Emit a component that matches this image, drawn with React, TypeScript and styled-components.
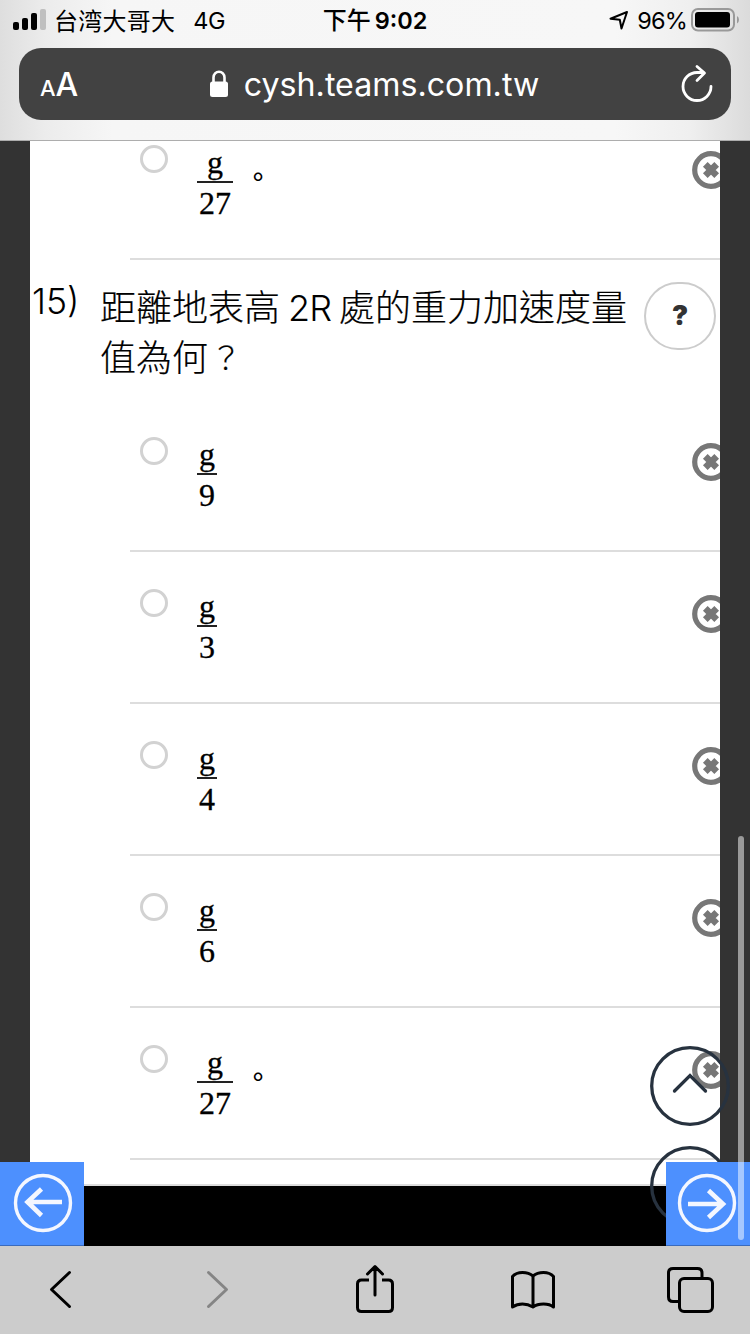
import React from 'react';
import styled, { createGlobalStyle } from 'styled-components';

const UI = `Inter, "Noto Sans CJK TC", sans-serif`;
const BODY = `Inter, "Noto Sans CJK TC", sans-serif`;

const Global = createGlobalStyle`
  * { box-sizing: border-box; }
  html, body { margin: 0; background: #000; }
`;

const Screen = styled.div`
  position: relative;
  display: flex;
  flex-direction: column;
  width: 750px;
  height: 1334px;
  overflow: hidden;
  font-family: ${UI};
  color: #000;
`;

const Header = styled.header`
  display: flex;
  flex-direction: column;
  flex: none;
  height: 141px;
  background: linear-gradient(to right, #dedede 0, #ececec 6%, #f6f6f6 15%, #f7f7f7 82%, #efefef 92%, #dbdbdb 100%);
  border-bottom: 1px solid #adadad;
`;

const StatusBar = styled.div`
  display: grid;
  grid-template-columns: 250px 1fr 250px;
  grid-template-rows: 40px;
  align-items: center;
  height: 40px;
  line-height: 34px;
  white-space: nowrap;
`;

const StatusLeft = styled.div`
  display: flex;
  align-items: center;
  padding-left: 13px;
`;

const Carrier = styled.span`
  margin-left: 8px;
  padding-bottom: 1px;
  font: 400 24px/34px "Noto Sans CJK SC", sans-serif;
  letter-spacing: 0.25px;
`;

const Network = styled.span`
  margin-left: 18px;
  padding-top: 1px;
  font-size: 23.5px;
  letter-spacing: -0.4px;
`;

const Clock = styled.div`
  display: flex;
  justify-content: center;
  align-items: center;
  gap: 4px;
  padding-top: 1px;
  font-size: 23.5px;
  font-weight: 600;
`;

const Meridiem = styled.span`
  padding-bottom: 3px;
  font: 500 24px/34px "Noto Sans CJK SC", sans-serif;
`;

const StatusRight = styled.div`
  display: flex;
  align-items: center;
  justify-content: flex-end;
  padding-right: 10px;
`;

const Percent = styled.span`
  margin: 0 4px 0 8px;
  padding-top: 1px;
  font-size: 23.5px;
  letter-spacing: -0.8px;
`;

const AddressBar = styled.div`
  display: flex;
  align-items: center;
  height: 72px;
  margin: 8px 19px 0;
  padding: 0 17px 0 21px;
  border-radius: 22px;
  background: #424242;
  color: #fff;
`;

const TextSize = styled.div`
  display: flex;
  align-items: baseline;
  width: 60px;
  padding-top: 4px;
  line-height: 40px;
`;

const SizeLetter = styled.span<{ $size: number }>`
  font-size: ${(p) => p.$size}px;
  font-weight: 450;
`;

const Address = styled.div`
  display: flex;
  flex: 1;
  align-items: center;
  justify-content: center;
  gap: 15px;
  padding-right: 32px;
  font-size: 32.2px;
  line-height: 70px;
`;

const Host = styled.span`
  padding-top: 2px;
`;

const Viewport = styled.main`
  flex: none;
  height: 1105px;
  overflow: hidden;
  background: linear-gradient(#333 1021px, #000 1021px);
`;

const Sheet = styled.div`
  height: 1045px;
  margin: 0 30px;
  padding-left: 100px;
  overflow: hidden;
  background: #fff;
  border-bottom: 2px solid #ddd;
`;

const SheetEnd = styled.div`
  height: 60px;
  background: #000;
`;

const OptionRow = styled.label<{ $clipped?: boolean }>`
  display: flex;
  align-items: flex-start;
  height: 152px;
  margin-top: ${(p) => (p.$clipped ? -33 : 0)}px;
  padding-left: 10px;
  border-bottom: 2px solid #ddd;
`;

const Radio = styled.span`
  flex: none;
  width: 28px;
  height: 28px;
  margin-top: 37px;
  border: 3px solid #d2d2d2;
  border-radius: 50%;
`;

const Fraction = styled.span`
  display: flex;
  flex-direction: column;
  align-items: center;
  margin: 38px 0 0 29px;
  font: 32px/32px "Liberation Serif", serif;
  -webkit-text-stroke: 0.3px #000;
`;

const Numerator = styled.span`
  height: 35px;
`;

const Denominator = styled.span`
  padding: 4px 2px 0;
  border-top: 2px solid #222;
`;

const FullStop = styled.span`
  width: 36px;
  margin: 50px 0 0 7px;
  text-align: center;
  font: 500 27px/36px "Noto Sans CJK TC", sans-serif;
`;

const Remove = styled.svg`
  flex: none;
  width: 38px;
  height: 38px;
  margin: 43px -10px 0 auto;
`;

const Question = styled.section`
  display: flex;
  align-items: flex-start;
  height: 140px;
  margin-left: -100px;
  font: 300 36px/50px ${BODY};
`;

const QuestionNumber = styled.span`
  width: 70px;
  padding: 17px 0 0 2px;
  font-size: 35.5px;
  font-weight: 280;
`;

const QuestionText = styled.p`
  width: 540px;
  margin: 0;
  padding-top: 23px;
  white-space: nowrap;
  -webkit-text-stroke: 0.2px #000;
`;

const Latin = styled.span`
  display: inline-block;
  width: 59px;
  text-align: center;
  font-weight: 280;
  letter-spacing: -1px;
  -webkit-text-stroke: 0;
`;

const QuestionMark = styled.span`
  display: inline-block;
  width: 36px;
  line-height: 46px;
  text-align: center;
  font-size: 31px;
  vertical-align: 2px;
`;

const Help = styled.button`
  width: 72px;
  height: 68px;
  margin: 22px 0 0 4px;
  padding: 0;
  border: 2px solid #ccc;
  border-radius: 34px;
  background: #fff;
  color: #333;
  font: 900 27px/60px Inter, sans-serif;
`;

const ScrollButton = styled.svg<{ $top: number }>`
  position: absolute;
  left: 650px;
  top: ${(p) => p.$top}px;
  width: 80px;
  height: 80px;
`;

const PageTurn = styled.button<{ $side: 'left' | 'right' }>`
  position: absolute;
  top: 1162px;
  ${(p) => p.$side}: 0;
  width: 84px;
  height: 84px;
  padding: 0;
  border: 0;
  border-bottom: 1px solid #3a6bbd;
  background: #4d90fe;
`;

const ScrollThumb = styled.div`
  position: absolute;
  left: 738px;
  top: 836px;
  width: 6px;
  height: 404px;
  border-radius: 3px;
  background: rgba(255, 255, 255, 0.5);
`;

const Toolbar = styled.nav`
  display: flex;
  flex: none;
  height: 88px;
  background: #ccc;
`;

const ToolIcon = styled.svg`
  display: block;
  width: 60px;
  height: 88px;
  fill: none;
  stroke: #000;
  stroke-width: 3;
  stroke-linecap: round;
  stroke-linejoin: round;
`;

const ToolButton = styled.button<{ $left: number }>`
  width: 60px;
  height: 88px;
  margin-left: ${(p) => p.$left}px;
  padding: 0;
  border: 0;
  background: none;
`;

type OptionProps = { value: string; stop?: boolean; clipped?: boolean };

const Option = ({ value, stop, clipped }: OptionProps) => (
  <OptionRow $clipped={clipped}>
    <Radio />
    <Fraction>
      <Numerator>g</Numerator>
      <Denominator>{value}</Denominator>
    </Fraction>
    {stop && <FullStop>。</FullStop>}
    <Remove viewBox="0 0 38 38">
      <circle cx="19" cy="19" r="16.3" fill="none" stroke="#777" strokeWidth="5.2" />
      <path d="M13.3 13.3 24.7 24.7M24.7 13.3 13.3 24.7" stroke="#777" strokeWidth="6.6" />
    </Remove>
  </OptionRow>
);

const TurnIcon = ({ d, cx }: { d: string; cx: number }) => (
  <svg width="84" height="83" fill="none" stroke="#f4f7ff" display="block">
    <circle cx={cx} cy="41" r="27.5" strokeWidth="3.4" />
    <path d={d} strokeWidth="4.6" />
  </svg>
);

export default function App() {
  return (
    <Screen>
      <Global />
      <Header>
        <StatusBar>
          <StatusLeft>
            <svg width="33" height="22" viewBox="0 0 33 22">
              <rect x="0" y="13" width="6" height="8" rx="2" />
              <rect x="9" y="9" width="6" height="12" rx="2" />
              <rect x="18" y="4" width="6" height="17" rx="2" />
              <rect x="27" y="0" width="6" height="21" rx="2" fill="#bfbfbf" />
            </svg>
            <Carrier>台湾大哥大</Carrier>
            <Network>4G</Network>
          </StatusLeft>
          <Clock><Meridiem>下午</Meridiem><span>9:02</span></Clock>
          <StatusRight>
            <svg width="20" height="20" viewBox="0 0 20 20" fill="none" stroke="#000" strokeWidth="2" strokeLinejoin="round">
              <path d="M1.5 8.7 18 2 12.5 18.5 10.8 9.8Z" />
            </svg>
            <Percent>96%</Percent>
            <svg width="49" height="24" viewBox="0 0 49 24">
              <rect x="1" y="1" width="42" height="21.5" rx="6" fill="none" stroke="#999" strokeWidth="2" />
              <rect x="4" y="4" width="35" height="15.5" rx="3" />
              <path d="M46 8q2 1.2 2 3.8T46 15.5Z" fill="#999" />
            </svg>
          </StatusRight>
        </StatusBar>
        <AddressBar>
          <TextSize>
            <SizeLetter $size={22}>A</SizeLetter>
            <SizeLetter $size={32}>A</SizeLetter>
          </TextSize>
          <Address>
            <svg width="20" height="28" viewBox="0 0 20 28">
              <rect x="1" y="11.5" width="18" height="15.5" rx="2.5" fill="#fff" />
              <path d="M4.5 13V7.5a5.5 5.7 0 0 1 11 0V13" fill="none" stroke="#fff" strokeWidth="2.6" />
            </svg>
            <Host>cysh.teams.com.tw</Host>
          </Address>
          <svg width="34" height="40" viewBox="0 0 34 40" fill="none" stroke="#fff" strokeWidth="2.8" strokeLinecap="round" strokeLinejoin="round">
            <path d="M31 22.5A14 14 0 1 1 17 8.5H23" />
            <path d="M17 2.5 24.5 9 17 16.5" />
          </svg>
        </AddressBar>
      </Header>
      <Viewport>
        <Sheet>
          <Option value="27" stop clipped />
          <Question>
            <QuestionNumber>15)</QuestionNumber>
            <QuestionText>
              距離地表高<Latin>2R</Latin>處的重力加速度量<br />值為何<QuestionMark>？</QuestionMark>
            </QuestionText>
            <Help>?</Help>
          </Question>
          <Option value="9" />
          <Option value="3" />
          <Option value="4" />
          <Option value="6" />
          <Option value="27" stop />
        </Sheet>
        <SheetEnd />
      </Viewport>
      <ScrollButton $top={1046} fill="none" stroke="#27323f" strokeWidth="3.3">
        <circle cx="40" cy="40" r="38.3" />
        <path d="M24.5 45 40 29.5 55.5 45" strokeLinecap="round" />
      </ScrollButton>
      <ScrollButton $top={1146} fill="none" stroke="#27323f" strokeWidth="3.3">
        <circle cx="40" cy="40" r="38.3" />
      </ScrollButton>
      <PageTurn $side="left">
        <TurnIcon cx={43} d="M62 40H27M41.5 27 27.5 40 41.5 53.5" />
      </PageTurn>
      <PageTurn $side="right">
        <TurnIcon cx={41} d="M22 42H57M42.5 28.5 57 42 42.5 55.5" />
      </PageTurn>
      <ScrollThumb />
      <Toolbar>
        <ToolButton $left={30}>
          <ToolIcon viewBox="30 0 60 88"><path d="M69.5 26.5 51.5 43.5 69.5 60.5" /></ToolIcon>
        </ToolButton>
        <ToolButton $left={97}>
          <ToolIcon viewBox="187 0 60 88"><path stroke="#858585" d="M208.5 26.5 226.5 43.5 208.5 60.5" /></ToolIcon>
        </ToolButton>
        <ToolButton $left={98}>
          <ToolIcon viewBox="345 0 60 88">
            <path strokeLinecap="butt" d="M369 34H361.5Q357.5 34 357.5 38V61.5Q357.5 65.5 361.5 65.5H388.5Q392.5 65.5 392.5 61.5V38Q392.5 34 388.5 34H382" />
            <path d="M375 49V21M367.5 28 375 20.5 382.5 28" />
          </ToolIcon>
        </ToolButton>
        <ToolButton $left={98}>
          <ToolIcon viewBox="503 0 60 88">
            <path d="M533 61V30Q529 26.5 522.5 26.5T512.5 30.5V61Q517 58 522.5 58T533 61Q537 58 543.5 58T553.5 61V30.5Q550 26.5 543.5 26.5T533 30" />
          </ToolIcon>
        </ToolButton>
        <ToolButton $left={98}>
          <ToolIcon viewBox="661 0 60 88">
            <rect x="679.5" y="32.5" width="33" height="33" rx="4.5" />
            <path d="M678.5 55.5H673Q668.5 55.5 668.5 51V27Q668.5 22.5 673 22.5H697.5Q702 22.5 702 27V31" />
          </ToolIcon>
        </ToolButton>
      </Toolbar>
    </Screen>
  );
}
